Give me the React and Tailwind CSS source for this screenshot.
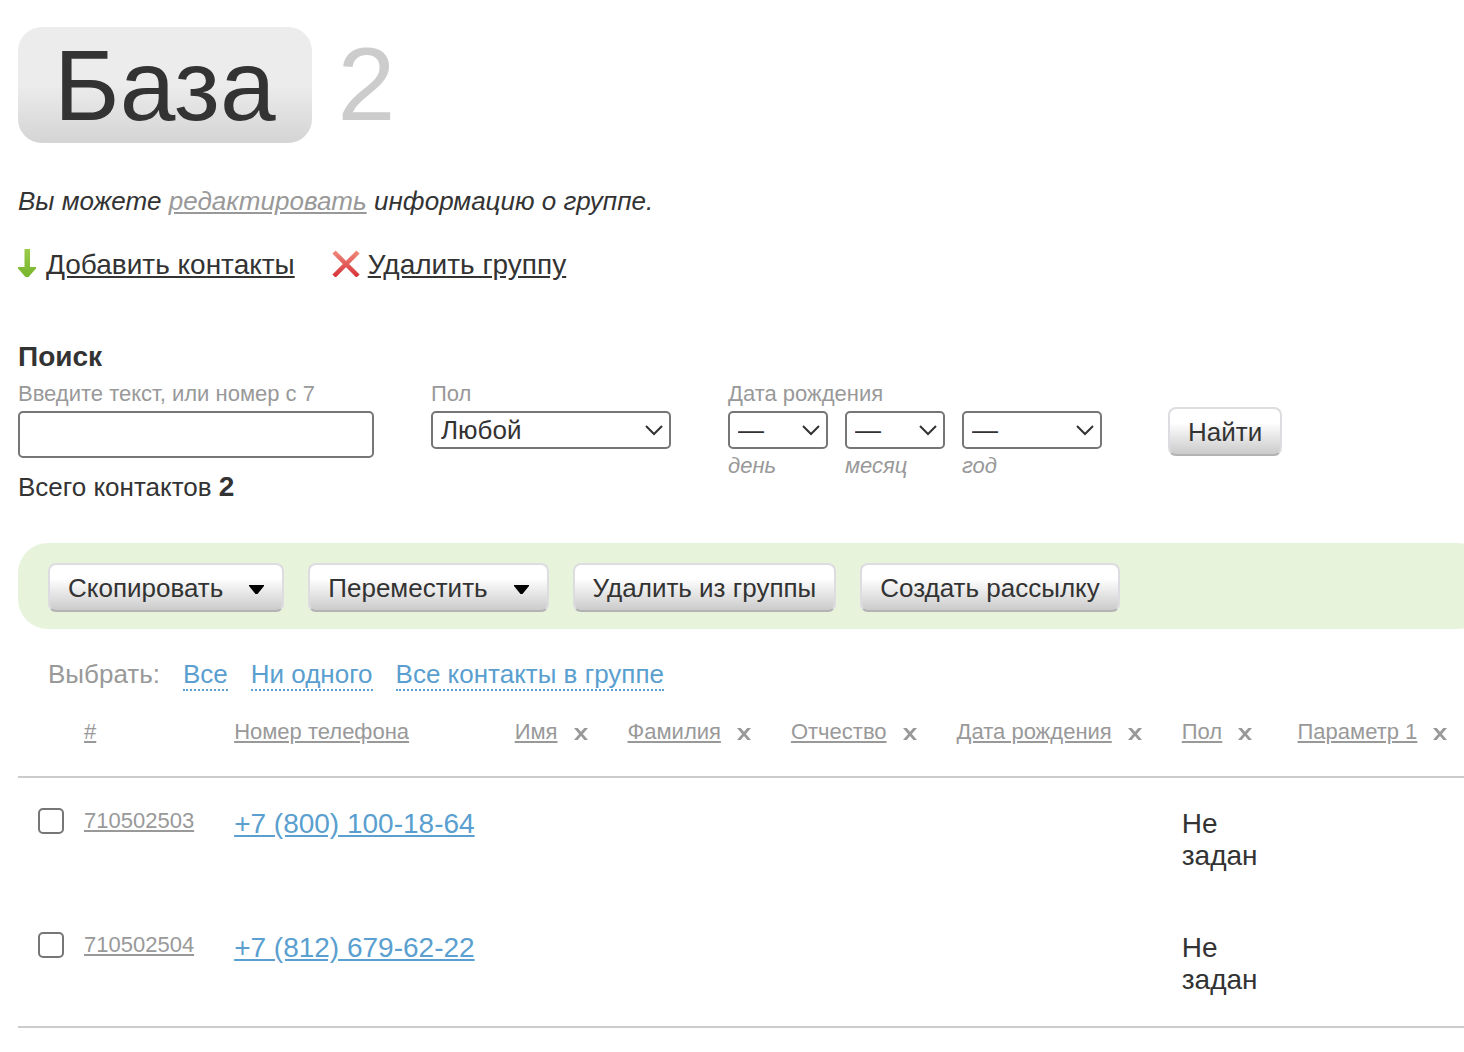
const BUTTON =
  "flex h-[49px] items-center whitespace-nowrap rounded-lg border-2 border-[#dddce0] border-b-[#b3b3b3] bg-linear-to-b from-white from-30% to-[#cbcbcb] px-[18px] pt-px text-[26px] leading-8 text-[#333]";

const COLUMNS = ["Имя", "Фамилия", "Отчество", "Дата рождения", "Пол", "Параметр 1"];

const CONTACTS = [
  { id: "710502503", phone: "+7 (800) 100-18-64", gender: "Не задан" },
  { id: "710502504", phone: "+7 (812) 679-62-22", gender: "Не задан" },
];

function ArrowDown() {
  return (
    <svg className="mb-1 h-7 w-[18px] shrink-0" viewBox="0 0 18 28" aria-hidden="true">
      <defs>
        <linearGradient id="arrow" x1="0" y1="0" x2="0" y2="1">
          <stop offset="0" stopColor="#9acb4a" />
          <stop offset="1" stopColor="#78b52c" />
        </linearGradient>
      </defs>
      <path d="M6.500 0h5.500v18h6v1.500L10.500 28h-3L0 19.500V18h6.500z" fill="url(#arrow)" />
    </svg>
  );
}

function Cross() {
  return (
    <svg className="mb-1 h-7 w-7 shrink-0" viewBox="0 0 28 28" aria-hidden="true">
      <defs>
        <linearGradient id="cross" gradientUnits="userSpaceOnUse" x1="0" y1="2" x2="0" y2="27">
          <stop offset="0" stopColor="#ef8a7d" />
          <stop offset="1" stopColor="#d8343a" />
        </linearGradient>
      </defs>
      <path d="M2 3 26 27M26 3 2 27" fill="none" stroke="url(#cross)" strokeWidth="4.500" />
    </svg>
  );
}

function Caret() {
  return (
    <svg className="ml-[26px] mt-[3px] h-[9px] w-[15px]" viewBox="0 0 15 9" aria-hidden="true">
      <path d="M0 0h15v1L8.500 9h-2L0 1z" />
    </svg>
  );
}

function RemoveIcon() {
  return (
    <svg className="h-3 w-[14px]" viewBox="0 0 14 12" aria-hidden="true">
      <path d="M0 0h3.700l3.300 3.800L10.300 0H14L8.900 5.900 14 12h-3.700L7 8.100 3.700 12H0l5.100-6.100z" fill="#999" />
    </svg>
  );
}

function Select({ id, label, option, width }) {
  return (
    <div className={"relative " + width}>
      <select
        id={id}
        aria-label={label}
        className="block h-[38px] w-full appearance-none rounded-[5px] border-2 border-[#767676] bg-white pl-2 text-[26px] leading-8 text-[#333]"
      >
        <option>{option}</option>
      </select>
      <svg
        className="pointer-events-none absolute right-2 top-[14px] h-[11px] w-[18px]"
        viewBox="0 0 18 11"
        fill="none"
        stroke="#333"
        strokeWidth="2"
        aria-hidden="true"
      >
        <path d="M1 1l8 8 8-8" />
      </svg>
    </div>
  );
}

function DatePart({ id, label, width }) {
  return (
    <div>
      <Select id={id} option="—" width={width} />
      <label htmlFor={id} className="mt-[3px] block text-[22px] italic leading-7 text-[#999]">
        {label}
      </label>
    </div>
  );
}

export default function App() {
  return (
    <main className="overflow-x-hidden bg-white pb-6 pl-[18px] pt-[26px] font-['Liberation_Sans',Arial,sans-serif] text-[28px] leading-8 text-[#333]">
      <h1 className="flex items-baseline text-[100px] leading-[116px]">
        <span className="rounded-[24px] bg-linear-to-b from-[#ececec] from-50% to-[#d4d4d4] px-9">База</span>
        <span className="ml-[26px] text-[104px] text-[#ccc]">2</span>
      </h1>

      <p className="mt-[42px] text-[26px] italic">
        Вы можете{" "}
        <a href="#edit" className="text-[#999] underline">редактировать</a>{" "}
        информацию о группе.
      </p>

      <nav className="mt-8 flex items-center">
        <a href="#add" className="flex items-center gap-[10px] underline">
          <ArrowDown />
          Добавить контакты
        </a>
        <a href="#delete" className="ml-[37px] flex items-center gap-2 underline">
          <Cross />
          Удалить группу
        </a>
      </nav>

      <form className="mt-[60px]" onSubmit={(e) => e.preventDefault()}>
        <h2 className="font-bold">Поиск</h2>
        <div className="mt-[7px] flex items-start">
          <div className="w-[356px]">
            <label htmlFor="query" className="block text-[22px] leading-7 text-[#999]">
              Введите текст, или номер с 7
            </label>
            <input
              id="query"
              type="text"
              className="mt-[3px] block h-[47px] w-full rounded-[5px] border-2 border-[#767676] px-2"
            />
            <p className="mt-[13px] text-[26px]">
              Всего контактов <b className="text-[28px]">2</b>
            </p>
          </div>
          <div className="ml-[57px]">
            <label htmlFor="gender" className="mb-[3px] block text-[22px] leading-7 text-[#999]">Пол</label>
            <Select id="gender" option="Любой" width="w-[240px]" />
          </div>
          <fieldset className="ml-[57px]">
            <legend className="mb-[3px] text-[22px] leading-7 text-[#999]">Дата рождения</legend>
            <div className="flex gap-[17px]">
              <DatePart id="day" label="день" width="w-[100px]" />
              <DatePart id="month" label="месяц" width="w-[100px]" />
              <DatePart id="year" label="год" width="w-[140px]" />
            </div>
          </fieldset>
          <button type="submit" className={BUTTON + " ml-[66px] mt-[27px]"}>Найти</button>
        </div>
      </form>

      <section className="mt-10 min-w-min">
        <div className="flex h-[86px] items-start gap-6 rounded-[30px] bg-[#e7f3db] px-[30px] pt-5">
          <button type="button" className={BUTTON}>Скопировать<Caret /></button>
          <button type="button" className={BUTTON}>Переместить<Caret /></button>
          <button type="button" className={BUTTON}>Удалить из группы</button>
          <button type="button" className={BUTTON}>Создать рассылку</button>
        </div>

        <div className="mt-[29px] flex gap-[23px] pl-[30px] text-[26px] text-[#999]">
          <span>Выбрать:</span>
          {["Все", "Ни одного", "Все контакты в группе"].map((text) => (
            <button key={text} type="button" className="-mb-px border-b-2 border-dotted border-[#5a9fcf] pt-px leading-[30px] text-[#5a9fcf]">
              {text}
            </button>
          ))}
        </div>

        <table className="mt-7 w-full border-b-2 border-[#ccc] text-left">
          <thead>
            <tr className="whitespace-nowrap border-b-2 border-[#ccc] text-[22px] leading-7 text-[#999]">
              <td className="px-5 pb-[30px]" />
              <th className="pb-[30px] pr-10 align-top font-normal"><a href="#id" className="underline">#</a></th>
              <th className="pb-[30px] pr-10 align-top font-normal"><a href="#phone" className="underline">Номер телефона</a></th>
              {COLUMNS.map((name) => (
                <th key={name} className="pb-[30px] pr-10 align-top font-normal">
                  <span className="flex items-center gap-4">
                    <a href="#sort" className="underline">{name}</a>
                    <button type="button" aria-label={"Убрать столбец " + name} className="pt-[3px]">
                      <RemoveIcon />
                    </button>
                  </span>
                </th>
              ))}
            </tr>
          </thead>
          <tbody>
            {CONTACTS.map((c) => (
              <tr key={c.id} className="align-top">
                <td className="px-5 pt-[30px]">
                  <input
                    type="checkbox"
                    aria-label={c.id}
                    className="block size-[26px] appearance-none rounded-[5px] border-2 border-[#767676] checked:bg-[#5a9fcf]"
                  />
                </td>
                <td className="pr-10 pt-[29px] text-[22px] leading-7 text-[#999]">
                  <a href="#contact" className="block underline">{c.id}</a>
                </td>
                <td className="whitespace-nowrap pr-10 pt-[30px]">
                  <a href="#contact" className="text-[#5a9fcf] underline">{c.phone}</a>
                </td>
                <td />
                <td />
                <td />
                <td />
                <td className="pb-[30px] pr-10 pt-[30px]">{c.gender}</td>
                <td />
              </tr>
            ))}
          </tbody>
        </table>
      </section>
    </main>
  );
}
